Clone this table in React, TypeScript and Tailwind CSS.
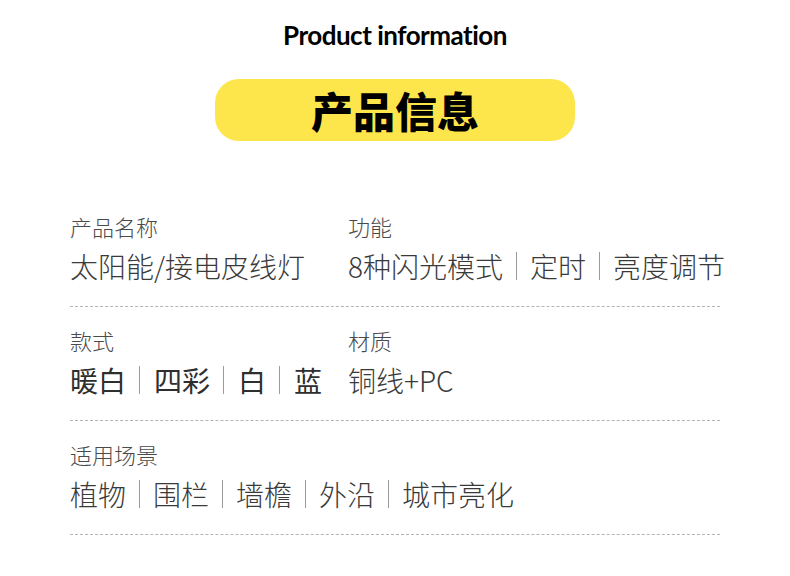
import React from 'react';

const cjk = '"Noto Sans CJK SC", "Noto Sans", sans-serif';

const Sep: React.FC<{ wide?: boolean }> = ({ wide }) => (
  <span className={`inline-block w-px h-[28px] bg-[#9a9a9a] ${wide ? 'ml-[13px] mr-[14px]' : 'mx-[13px]'}`} />
);

const Value: React.FC<{ parts: string[]; bold?: boolean }> = ({ parts, bold }) => (
  <div
    className={`flex items-center text-[28px] leading-[36px] h-[36px] mt-[7px] whitespace-nowrap ${
      bold ? 'font-normal text-[#2e2e2e]' : 'font-light text-[#3a3a3a]'
    }`}
  >
    {parts.map((p, i) => (
      <React.Fragment key={i}>
        {i > 0 && <Sep wide={bold} />}
        <span>{p}</span>
      </React.Fragment>
    ))}
  </div>
);

const Field: React.FC<{ label: string; parts: string[]; bold?: boolean }> = ({ label, parts, bold }) => (
  <div>
    <div className="text-[22px] leading-[30px] font-light text-[#4a4a4a]">{label}</div>
    <Value parts={parts} bold={bold} />
  </div>
);

const App: React.FC = () => {
  return (
    <div className="w-[790px] h-[576px] bg-white overflow-hidden" style={{ fontFamily: cjk }}>
      <h1
        className="pt-[20px] text-center text-[26px] leading-[30px] font-bold text-black tracking-[-0.5px]"
        style={{ fontFamily: 'Lato, "Noto Sans", sans-serif' }}
      >
        Product information
      </h1>

      <div className="mx-auto mt-[29px] w-[360px] h-[62px] rounded-[24px] bg-[#fde64b] flex items-center justify-center">
        <span className="text-[42px] font-black text-black leading-none">产品信息</span>
      </div>

      <div className="mx-[70px] mt-[52px]">
        <div className="grid grid-cols-[278px_1fr] pt-[18px] pb-[22px] border-b border-dashed border-[#b4b4b4]">
          <Field label="产品名称" parts={['太阳能/接电皮线灯']} />
          <Field label="功能" parts={['8种闪光模式', '定时', '亮度调节']} />
        </div>
        <div className="grid grid-cols-[278px_1fr] pt-[18px] pb-[22px] border-b border-dashed border-[#b4b4b4]">
          <Field label="款式" parts={['暖白', '四彩', '白', '蓝']} bold />
          <Field label="材质" parts={['铜线+PC']} />
        </div>
        <div className="pt-[18px] pb-[22px] border-b border-dashed border-[#b4b4b4]">
          <Field label="适用场景" parts={['植物', '围栏', '墙檐', '外沿', '城市亮化']} />
        </div>
      </div>
    </div>
  );
};

export default App;
